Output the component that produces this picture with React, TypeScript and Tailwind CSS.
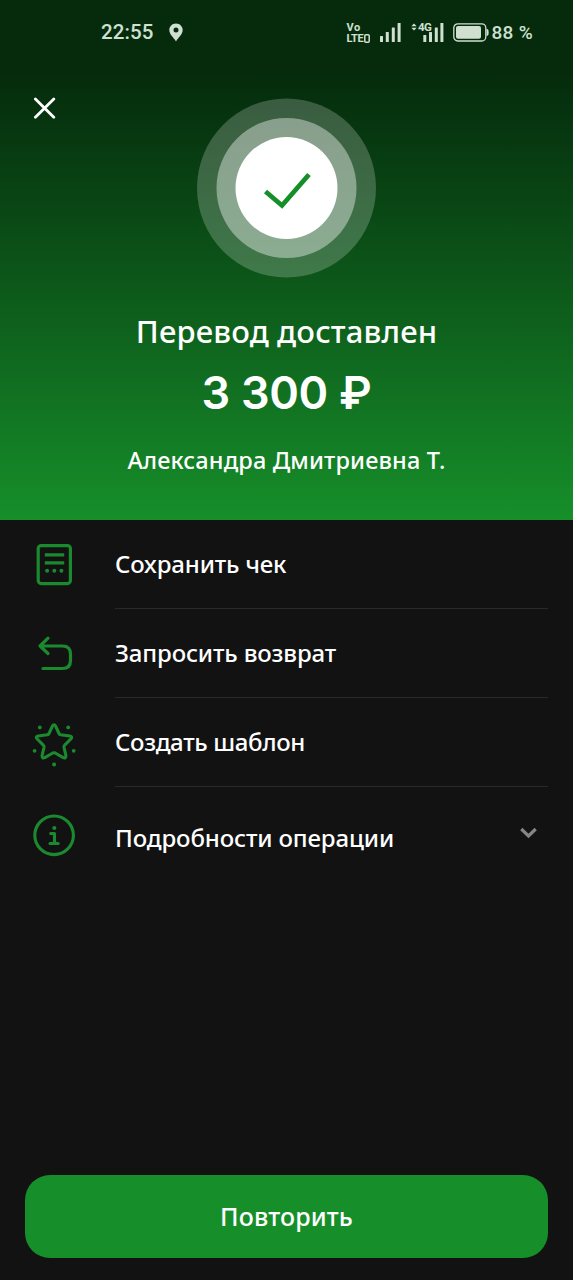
import type { ReactNode } from 'react';

function StatusBar() {
  return (
    <div className="flex h-[65px] items-center pl-[101px] font-['Roboto','Noto_Sans',sans-serif] text-[#cfe0d1]">
      <span className="w-[68px] pb-px text-[20.5px] font-medium tracking-[0.1px]">22:55</span>
      <svg width="14" height="19" viewBox="0 0 14 19" aria-hidden="true">
        <path
          fill="currentColor"
          fillRule="evenodd"
          d="M7 0.5C3.2 0.5 0.3 3.4 0.3 7.1C0.3 11.5 4.4 14.1 7 18.5C9.6 14.1 13.7 11.5 13.7 7.1C13.7 3.4 10.8 0.5 7 0.5ZM7 4.6A2.5 2.5 0 1 1 7 9.6A2.5 2.5 0 0 1 7 4.6Z"
        />
      </svg>
      <div className="ml-[163.5px] flex h-[22px] w-[33.5px] flex-col text-[11px] leading-[11px] font-bold">
        <span className="tracking-[0.5px]">Vo</span>
        <span className="flex items-center whitespace-nowrap tracking-[-0.3px]">
          LTE
          <svg width="6" height="9" viewBox="0 0 6 9" className="ml-px" aria-hidden="true">
            <rect x="0.8" y="0.8" width="4.4" height="7.4" rx="1" fill="none" stroke="currentColor" strokeWidth="1.5" />
          </svg>
        </span>
      </div>
      <svg width="21" height="19" viewBox="0 0 21 19" fill="currentColor" aria-hidden="true">
        <rect x="0" y="13" width="3" height="6" rx="0.5" />
        <rect x="5.8" y="9" width="3" height="10" rx="0.5" />
        <rect x="11.8" y="4.5" width="3" height="14.5" rx="0.5" />
        <rect x="17.6" y="0" width="3" height="19" rx="0.5" />
      </svg>
      <div className="relative ml-[10px] h-[19px] w-[33px]">
        <svg width="33" height="19" viewBox="0 0 33 19" fill="currentColor" aria-hidden="true">
          <path d="M0.3 3.3L3 0.6L5.7 3.3ZM0.3 4.8H5.7L3 7.5Z" />
          <rect x="12.3" y="12" width="3" height="7" rx="0.5" />
          <rect x="18" y="9" width="3" height="10" rx="0.5" />
          <rect x="23.8" y="4.5" width="3" height="14.5" rx="0.5" />
          <rect x="29.4" y="0" width="3" height="19" rx="0.5" />
        </svg>
        <span className="absolute top-[-1px] left-[7px] text-[11.5px] leading-[11px] font-bold tracking-[-0.6px]">4G</span>
      </div>
      <svg width="36" height="19" viewBox="0 0 36 19" className="ml-[8.5px]" aria-hidden="true">
        <rect x="0.8" y="0.8" width="32" height="17.2" rx="4" fill="none" stroke="currentColor" strokeWidth="1.3" />
        <rect x="3" y="3" width="25" height="12.8" rx="2" fill="currentColor" />
        <path d="M33.5 6H34.5Q35.7 6.3 35.7 9.4Q35.7 12.5 34.5 12.8H33.5Z" fill="currentColor" />
      </svg>
      <span className="ml-[3px] pt-[2px] text-[19px] font-medium tracking-[0.3px] whitespace-nowrap">88 %</span>
    </div>
  );
}

function ReceiptIcon() {
  return (
    <svg width="48" height="48" viewBox="0 0 48 48" fill="none" stroke="currentColor" strokeWidth="3.2" aria-hidden="true">
      <rect x="8.2" y="4.6" width="32.2" height="38" rx="3" />
      <path d="M14.8 13.9H34.2M14.8 21.8H34.2" />
      <g fill="currentColor" stroke="none">
        <circle cx="17.1" cy="29.7" r="2" />
        <circle cx="24.3" cy="29.7" r="2" />
        <circle cx="31.4" cy="29.7" r="2" />
      </g>
    </svg>
  );
}

function ReturnIcon() {
  return (
    <svg width="48" height="48" viewBox="0 0 48 48" fill="none" stroke="currentColor" strokeWidth="3.2" strokeLinecap="round" strokeLinejoin="round" aria-hidden="true">
      <path d="M18 8.2L10 16L18 23.5M10 16H32.5Q40.5 16 40.5 24V30.5Q40.5 38.5 32.5 38.5H13" />
    </svg>
  );
}

function StarIcon() {
  return (
    <svg width="48" height="48" viewBox="0 0 48 48" fill="none" stroke="currentColor" strokeWidth="3.1" strokeLinejoin="round" aria-hidden="true">
      <path d="M22.3 7.3Q24 4.3 25.7 7.3L29 14.5Q29.5 15.6 30.7 15.8L39.8 17Q43 17.8 40.8 20L34.7 26.2Q33.8 27 34 28.3L35.9 36.5Q36.2 39.8 33.2 38.6L25.2 34Q24 33.4 22.8 34L14.8 38.6Q11.8 39.8 12.1 36.5L14 28.3Q14.2 27 13.3 26.2L7.2 20Q5 17.8 8.2 17L17.3 15.8Q18.5 15.6 19 14.5Z" />
      <g fill="currentColor" stroke="none">
        <circle cx="9.8" cy="8.4" r="1.9" />
        <circle cx="38.2" cy="8.4" r="1.9" />
        <circle cx="4.6" cy="31.8" r="1.9" />
        <circle cx="43.7" cy="31.8" r="1.9" />
        <circle cx="24.1" cy="45.6" r="2" />
      </g>
    </svg>
  );
}

function InfoIcon() {
  return (
    <svg width="48" height="48" viewBox="0 0 48 48" fill="none" stroke="currentColor" strokeWidth="3.1" strokeLinecap="round" strokeLinejoin="round" aria-hidden="true">
      <circle cx="24.1" cy="24.3" r="19.3" />
      <path d="M20.7 22.5H24.5V32.5M20 32.5H28.2" />
      <circle cx="24.3" cy="17" r="2.1" fill="currentColor" stroke="none" />
    </svg>
  );
}

function ActionRow({ icon, children }: { icon: ReactNode; children: ReactNode }) {
  return (
    <li className="flex h-[89px] pr-[25px] pl-[30px]">
      <span className="flex w-[85px] items-center text-[#1b8a2f]">{icon}</span>
      <span className="flex flex-1 items-center border-b border-[#292929]">{children}</span>
    </li>
  );
}

export default function App() {
  return (
    <main className="flex h-[1280px] w-[573px] flex-col overflow-hidden bg-[#121212] font-['Noto_Sans','Open_Sans',sans-serif] font-medium text-white">
      <header className="flex h-[520px] flex-col bg-linear-to-b from-[#052b0c] from-[14%] to-[#168f2a]">
        <StatusBar />
        <div className="flex h-[212px] pt-[33px]">
          <button aria-label="Закрыть" className="-mt-px flex h-[22px] w-[197px] items-center pl-[33px]">
            <svg width="23" height="22" viewBox="0 0 23 22" fill="none" stroke="currentColor" strokeWidth="2.8" strokeLinecap="round">
              <path d="M2.4 1.9L20.8 20.3M20.8 1.9L2.4 20.3" />
            </svg>
          </button>
          <svg width="179" height="180" viewBox="0 0 179 180" aria-hidden="true">
            <circle cx="89.5" cy="90" r="89.5" fill="white" fillOpacity="0.21" />
            <circle cx="89.5" cy="90" r="70" fill="white" fillOpacity="0.4" />
            <circle cx="89.5" cy="90" r="51" fill="white" />
            <path d="M68.5 93.5L85 107.5L112 76.5" fill="none" stroke="#168f2a" strokeWidth="4.8" />
          </svg>
        </div>
        <div className="flex flex-col items-center whitespace-nowrap">
          <h1 className="mt-[33px] text-[31px] leading-[42px] font-medium tracking-[0.15px]">Перевод доставлен</h1>
          <p className="mt-[9px] font-['Inter','Noto_Sans',sans-serif] text-[45px] leading-[64px] font-semibold tracking-[-0.3px]">3 300 ₽</p>
          <p className="mt-[19px] text-[23.5px] leading-[32px] tracking-[0.15px]">Александра Дмитриевна Т.</p>
        </div>
      </header>
      <ul className="flex flex-col text-[24px] leading-[32px] whitespace-nowrap">
        <ActionRow icon={<ReceiptIcon />}><span className="tracking-[-0.15px]">Сохранить чек</span></ActionRow>
        <ActionRow icon={<ReturnIcon />}><span className="tracking-[-0.15px]">Запросить возврат</span></ActionRow>
        <ActionRow icon={<StarIcon />}><span className="tracking-[-0.35px]">Создать шаблон</span></ActionRow>
        <li className="flex h-[96px] items-center pr-[36px] pl-[30px]">
          <span className="flex w-[85px] text-[#1b8a2f]"><InfoIcon /></span>
          <span className="flex-1 pt-[5px] tracking-[-0.13px]">Подробности операции</span>
          <svg width="17" height="12" viewBox="0 0 17 12" className="mb-[4px]" fill="none" stroke="#858585" strokeWidth="3.2" aria-hidden="true">
            <path d="M1.3 2L8.5 9L15.7 2" />
          </svg>
        </li>
      </ul>
      <button className="mx-[25px] mt-auto mb-[22px] flex h-[83px] items-center justify-center rounded-[25px] bg-[#168f2a] pb-[2px] text-[25px] leading-[32px] tracking-[0.15px]">
        Повторить
      </button>
    </main>
  );
}
